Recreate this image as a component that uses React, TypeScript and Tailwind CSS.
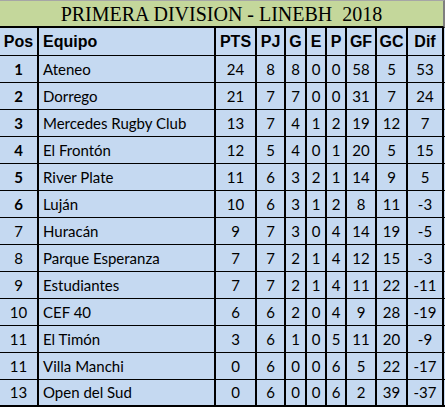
import React from 'react';

type Row = {
  pos: number;
  team: string;
  pts: number;
  pj: number;
  g: number;
  e: number;
  p: number;
  gf: number;
  gc: number;
  dif: number;
};

const rows: Row[] = [
  { pos: 1, team: 'Ateneo', pts: 24, pj: 8, g: 8, e: 0, p: 0, gf: 58, gc: 5, dif: 53 },
  { pos: 2, team: 'Dorrego', pts: 21, pj: 7, g: 7, e: 0, p: 0, gf: 31, gc: 7, dif: 24 },
  { pos: 3, team: 'Mercedes Rugby Club', pts: 13, pj: 7, g: 4, e: 1, p: 2, gf: 19, gc: 12, dif: 7 },
  { pos: 4, team: 'El Frontón', pts: 12, pj: 5, g: 4, e: 0, p: 1, gf: 20, gc: 5, dif: 15 },
  { pos: 5, team: 'River Plate', pts: 11, pj: 6, g: 3, e: 2, p: 1, gf: 14, gc: 9, dif: 5 },
  { pos: 6, team: 'Luján', pts: 10, pj: 6, g: 3, e: 1, p: 2, gf: 8, gc: 11, dif: -3 },
  { pos: 7, team: 'Huracán', pts: 9, pj: 7, g: 3, e: 0, p: 4, gf: 14, gc: 19, dif: -5 },
  { pos: 8, team: 'Parque Esperanza', pts: 7, pj: 7, g: 2, e: 1, p: 4, gf: 12, gc: 15, dif: -3 },
  { pos: 9, team: 'Estudiantes', pts: 7, pj: 7, g: 2, e: 1, p: 4, gf: 11, gc: 22, dif: -11 },
  { pos: 10, team: 'CEF 40', pts: 6, pj: 6, g: 2, e: 0, p: 4, gf: 9, gc: 28, dif: -19 },
  { pos: 11, team: 'El Timón', pts: 3, pj: 6, g: 1, e: 0, p: 5, gf: 11, gc: 20, dif: -9 },
  { pos: 11, team: 'Villa Manchi', pts: 0, pj: 6, g: 0, e: 0, p: 6, gf: 5, gc: 22, dif: -17 },
  { pos: 13, team: 'Open del Sud', pts: 0, pj: 6, g: 0, e: 0, p: 6, gf: 2, gc: 39, dif: -37 },
];

const cols = 'grid grid-cols-[39px_177px_41px_29px_21px_20px_20px_30px_31px_36px]';
const cell = 'flex items-center justify-center border-r-2 border-black';

export default function App() {
  return (
    <div className="w-[447px] h-[410px] bg-white">
      <div className="w-[445px] bg-[#c5d9f1] text-black">
        <div className="h-[28px] bg-[#c4d79b] border-t border-[#a6a6a6] border-b-2 border-b-black border-r-2 border-r-[#7f7f7f] flex items-center justify-center font-['Liberation_Serif',serif] text-[20px] leading-none whitespace-pre">
          PRIMERA DIVISION - LINEBH  2018
        </div>

        <div className={`${cols} h-[28px] border-b border-black font-['Liberation_Sans',Arial,sans-serif] font-bold text-[16px] leading-none`}>
          <div className={cell}>Pos</div>
          <div className={`${cell} justify-start pl-[4px]`}>Equipo</div>
          <div className={cell}>PTS</div>
          <div className={cell}>PJ</div>
          <div className={cell}>G</div>
          <div className={cell}>E</div>
          <div className={cell}>P</div>
          <div className={cell}>GF</div>
          <div className={cell}>GC</div>
          <div className={cell}>Dif</div>
        </div>

        {rows.map((r, i) => (
          <div
            key={r.team}
            className={`${cols} h-[27px] font-['Lato','Open_Sans',sans-serif] text-[15px] leading-none ${
              i === rows.length - 1 ? 'border-b-2' : 'border-b'
            } border-black`}
          >
            <div className={`${cell} ${r.pos <= 6 ? 'font-bold' : ''}`}>{r.pos}</div>
            <div className={`${cell} justify-start pl-[4px]`}>{r.team}</div>
            <div className={cell}>{r.pts}</div>
            <div className={cell}>{r.pj}</div>
            <div className={cell}>{r.g}</div>
            <div className={cell}>{r.e}</div>
            <div className={cell}>{r.p}</div>
            <div className={cell}>{r.gf}</div>
            <div className={cell}>{r.gc}</div>
            <div className={cell}>{r.dif}</div>
          </div>
        ))}
      </div>
    </div>
  );
}
